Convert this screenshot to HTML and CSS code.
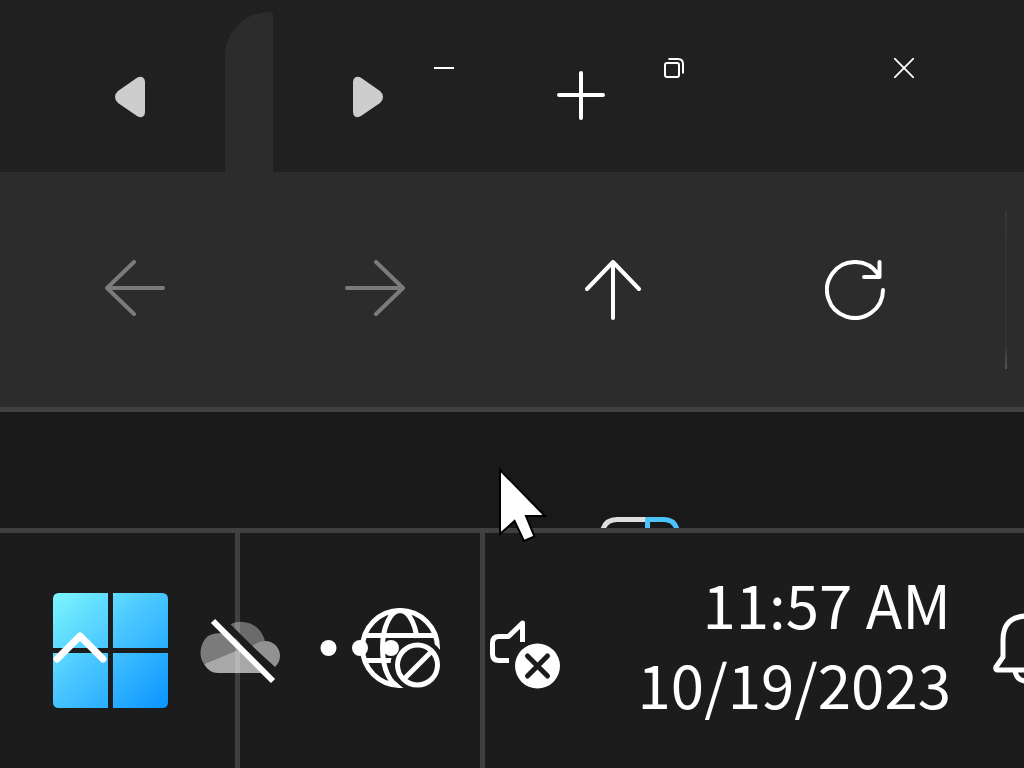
FILE: index.html
```html
<!DOCTYPE html>
<html lang="en">
<head>
    <meta charset="utf-8">
    <title>Desktop</title>
    <meta name="viewport" content="width=device-width, initial-scale=1.0">
    <link rel="stylesheet" href="styles.css">
</head>
<body>
    <header class="titlebar">
        <div class="tab-strip">
            <button class="scroll-btn" aria-label="Scroll tabs left">
                <svg width="30" height="42" viewBox="0 0 30 42"><path d="M22 1.700Q25 0 28 1.500Q30 3 30 6V36Q30 39 28 40.500Q25 42 22 40L3 27Q0 24.500 0 21Q0 17.500 3 15Z" fill="#cdcdcd"/></svg>
            </button>
            <div class="tab"></div>
            <button class="scroll-btn" aria-label="Scroll tabs right">
                <svg width="30" height="42" viewBox="0 0 30 42"><path d="M8 1.700Q5 0 2 1.500Q0 3 0 6V36Q0 39 2 40.500Q5 42 8 40L27 27Q30 24.500 30 21Q30 17.500 27 15Z" fill="#cdcdcd"/></svg>
            </button>
            <button class="new-tab-btn" aria-label="New tab">
                <svg width="50" height="54" viewBox="0 0 50 54"><path d="M25 3V48M3 25H47" fill="none" stroke="#fff" stroke-width="4" stroke-linecap="round"/></svg>
            </button>
        </div>
        <div class="window-controls">
            <button aria-label="Minimize">
                <svg width="20" height="20" viewBox="0 0 20 20"><path d="M0 10H20" stroke="#fff" stroke-width="2"/></svg>
            </button>
            <button aria-label="Restore">
                <svg width="20" height="20" viewBox="0 0 20 20" fill="none" stroke="#fff" stroke-width="2"><rect x="1" y="5" width="14" height="14" rx="2"/><path d="M4.500 1H14Q19 1 19 6V15.500"/></svg>
            </button>
            <button aria-label="Close">
                <svg width="20" height="20" viewBox="0 0 20 20"><path d="M.7 .7L19.300 19.300M19.300 .7L.7 19.300" stroke="#fff" stroke-width="1.800" stroke-linecap="round"/></svg>
            </button>
        </div>
    </header>

    <nav class="toolbar">
        <button aria-label="Back" disabled>
            <svg width="60" height="60" viewBox="0 0 60 60"><path d="M29 2L2 28L29 54M2 28H58"/></svg>
        </button>
        <button aria-label="Forward" disabled>
            <svg width="60" height="60" viewBox="0 0 60 60"><path d="M31 2L58 28L31 54M58 28H2"/></svg>
        </button>
        <button aria-label="Up">
            <svg width="60" height="60" viewBox="0 0 60 60"><path d="M2 29L28 2L54 29M28 2V58"/></svg>
        </button>
        <button aria-label="Refresh">
            <svg width="60" height="60" viewBox="0 0 60 60"><path d="M58 30A28 28 0 1 1 53 14M54.500 2V17H39"/></svg>
        </button>
        <div class="separator"></div>
    </nav>

    <main class="content">
        <svg width="80" height="11" viewBox="0 0 80 11" fill="none" stroke-width="5">
            <path d="M2.500 14Q5 2.500 17 2.500H46" stroke="#dedede"/>
            <path d="M47.500 14V2.500H64Q75 2.500 77.500 14" stroke="#4cc2ff" stroke-linejoin="round"/>
        </svg>
        <svg class="cursor" width="50" height="74" viewBox="0 0 50 74"><path d="M2 2V66L16.500 53L26 73L36.500 68.500L28 48H47Z" fill="#fff" stroke="#000" stroke-width="2"/></svg>
    </main>

    <footer class="taskbar">
        <div class="pinned">
            <button class="start-btn" aria-label="Start">
                <svg width="115" height="115" viewBox="0 0 115 115">
                    <defs>
                        <linearGradient id="logo" gradientUnits="userSpaceOnUse" x1="0" y1="0" x2="115" y2="115">
                            <stop offset="0" stop-color="#7cf6ff"/>
                            <stop offset="0.5" stop-color="#45c3ff"/>
                            <stop offset="1" stop-color="#0a95ff"/>
                        </linearGradient>
                    </defs>
                    <path fill="url(#logo)" d="M6 0H55V55H0V6Q0 0 6 0ZM60 0H109Q115 0 115 6V55H60ZM0 60H55V115H6Q0 115 0 109ZM60 60H115V109Q115 115 109 115H60Z"/>
                </svg>
            </button>
            <button class="more-btn" aria-label="More">
                <svg width="80" height="21" viewBox="0 0 80 21" fill="#fff"><circle cx="8.500" cy="8" r="8"/><circle cx="40" cy="8" r="8"/><circle cx="71" cy="8" r="8"/></svg>
            </button>
        </div>
        <div class="tray">
            <button class="tray-btn" aria-label="Show hidden icons">
                <svg width="54" height="40" viewBox="0 0 54 40"><path d="M4 28L27 5L50 28" fill="none" stroke="#fff" stroke-width="7" stroke-linecap="round" stroke-linejoin="round"/></svg>
            </button>
            <button class="tray-btn" aria-label="OneDrive">
                <svg width="80" height="66" viewBox="0 0 80 66">
                    <path d="M29 7Q36 3 43 4C54 5 62 12 65 23Q58 23 52 28Z" fill="#fff" fill-opacity=".35"/>
                    <path d="M52 28Q58 23 65 23C74 23 80 30 80 38Q80 44 75 49Z" fill="#fff" fill-opacity=".52"/>
                    <path d="M4 46C-2 38 0 25 8 18Q13 15 23 15L38 32Z" fill="#fff" fill-opacity=".42"/>
                    <path d="M4 46L38 32L61 55H18Q9 55 4 46Z" fill="#fff" fill-opacity=".62"/>
                    <path d="M22 2L76 56" stroke="#1c1c1c" stroke-width="6"/>
                    <path d="M13 3L73 63" stroke="#fff" stroke-width="6"/>
                </svg>
            </button>
            <button class="tray-btn" aria-label="No internet access">
                <svg width="80" height="85" viewBox="0 0 80 85" fill="none" stroke="#fff" stroke-width="5">
                    <mask id="globe-cut">
                        <rect width="80" height="85" fill="#fff" stroke="none"/>
                        <circle cx="57.500" cy="57" r="27" fill="#000" stroke="none"/>
                    </mask>
                    <g mask="url(#globe-cut)">
                        <circle cx="40" cy="40" r="37.500"/>
                        <ellipse cx="40" cy="40" rx="17.500" ry="37.500"/>
                        <path d="M6 27.500H74M6 52.500H74"/>
                    </g>
                    <circle cx="57.500" cy="57" r="20"/>
                    <path d="M44 71L71 44"/>
                </svg>
            </button>
            <button class="volume-btn" aria-label="Muted">
                <svg width="70" height="76" viewBox="0 0 70 76">
                    <path d="M32.500 29V10L18.500 23.500H9Q2.500 23.500 2.500 30V41Q2.500 47.500 9 47.500H19" fill="none" stroke="#fff" stroke-width="5" stroke-linejoin="round"/>
                    <circle cx="47.500" cy="53" r="22.500" fill="#fff"/>
                    <path d="M37.500 43L57.500 63M57.500 43L37.500 63" stroke="#1c1c1c" stroke-width="5" stroke-linecap="round"/>
                </svg>
            </button>
            <button class="clock">
                <span>11:57 AM</span>
                <span>10/19/2023</span>
            </button>
            <button class="bell-btn" aria-label="Notifications">
                <svg width="66" height="76" viewBox="0 0 66 76" fill="none" stroke="#fff" stroke-width="5" stroke-linejoin="round"><path d="M33 3Q10 4 10 27V44L3 54Q2 57 5 57H61Q64 57 63 54L56 44V27Q56 4 33 3ZM22 58Q24 68 33 68Q42 68 44 58"/></svg>
            </button>
        </div>
    </footer>
</body>
</html>
```

FILE: styles.css
```css
* {
    box-sizing: border-box;
}
body {
    display: flex;
    flex-direction: column;
    min-height: 100vh;
    margin: 0;
    overflow: hidden;
    background-color: #191919;
    color: #fff;
    font-family: "Noto Sans CJK SC", "Noto Sans", sans-serif;
}
button {
    display: flex;
    align-items: center;
    justify-content: center;
    flex-shrink: 0;
    padding: 0;
    border: none;
    background: none;
    color: inherit;
    font: inherit;
}
svg {
    display: block;
    flex-shrink: 0;
}

/* Title bar: window controls share the cell with the tab strip */
.titlebar {
    display: grid;
    height: 172px;
    background-color: #202020;
}
.tab-strip,
.window-controls {
    grid-area: 1 / 1;
    display: flex;
}
.tab-strip {
    padding: 12px 0 0 35px;
}
.scroll-btn {
    width: 190px;
    padding-top: 10px;
}
.tab {
    width: 48px;
    background-color: #2c2c2c;
    border-radius: 48px 4px 0 0;
}
.new-tab-btn {
    width: 236px;
    padding-top: 10px;
}
.window-controls {
    justify-self: end;
    align-self: start;
    padding-right: 5px;
}
.window-controls button {
    width: 230px;
    height: 136px;
}

/* Navigation */
.toolbar {
    display: flex;
    align-items: center;
    height: 240px;
    padding-left: 15px;
    background-color: #2c2c2c;
    border-bottom: 5px solid #404040;
}
.toolbar button {
    width: 240px;
    height: 160px;
}
.toolbar path {
    fill: none;
    stroke: #fff;
    stroke-width: 4px;
    stroke-linecap: round;
    stroke-linejoin: round;
}
.toolbar button:disabled path {
    stroke: #7b7b7b;
}
.separator {
    width: 2px;
    height: 158px;
    margin-left: 30px;
    background: linear-gradient(#383838, #323232 20%, #323232 85%, #555);
}

.content {
    position: relative;
    display: flex;
    flex: 1;
    align-items: flex-end;
    padding-left: 600px;
}
.cursor {
    position: absolute;
    top: 56px;
    left: 498px;
    z-index: 1;
}

/* Taskbar: tray lies over the pinned buttons */
.taskbar {
    display: grid;
    height: 240px;
    background-color: #1c1c1c;
    border-top: 5px solid #404040;
}
.pinned,
.tray {
    grid-area: 1 / 1;
    display: flex;
    min-width: 0;
}
.start-btn {
    width: 240px;
    justify-content: flex-start;
    padding-left: 53px;
    border-right: 5px solid #404040;
}
.more-btn {
    width: 245px;
    border-right: 5px solid #404040;
}
.tray-btn {
    width: 160px;
}
.volume-btn {
    width: 90px;
}
.clock {
    flex: 1;
    flex-direction: column;
    align-items: flex-end;
    padding: 0 42px 16px 0;
    font-size: 60px;
    line-height: 80px;
    white-space: nowrap;
}
.bell-btn {
    width: 31px;
    justify-content: flex-start;
    overflow: hidden;
}
```
